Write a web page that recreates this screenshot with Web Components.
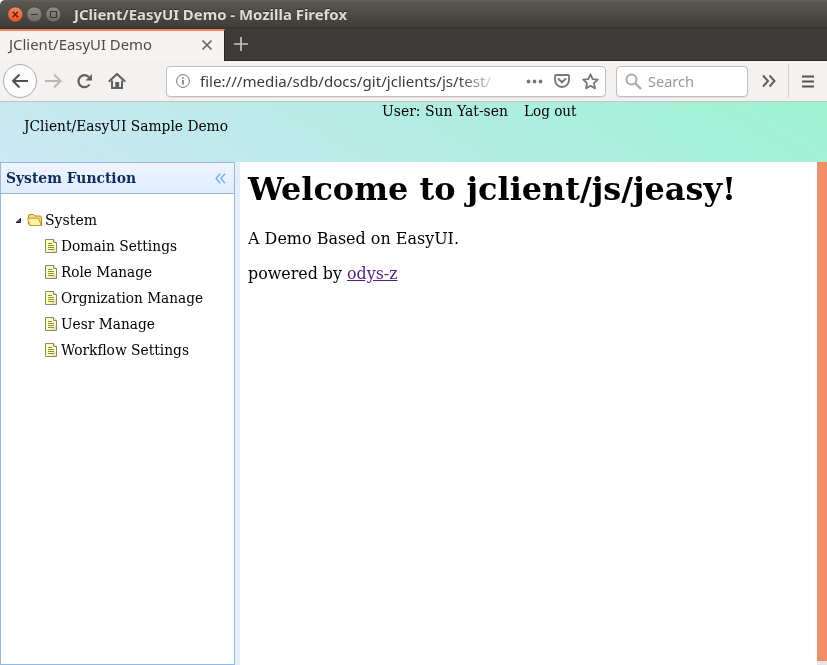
<!DOCTYPE html>
<html lang="en"><head><meta charset="utf-8"><title>JClient/EasyUI Demo</title>
<style>html,body{margin:0;height:100%;overflow:hidden;background:#fff}</style></head><body>
<browser-window></browser-window>
<script>
const define=(name,css,html)=>customElements.define(name,class extends HTMLElement{
  constructor(){super();this.attachShadow({mode:'open'}).innerHTML='<style>*{box-sizing:border-box}svg{display:block;flex:none}'+css+'</style>'+html}
});

/* One line of text set to an exact width */
customElements.define('fit-text',class extends HTMLElement{
  connectedCallback(){
    if(this.shadowRoot)return;
    const r=this.attachShadow({mode:'open'}),w=+this.getAttribute('w');
    r.innerHTML='<style>:host{display:block;flex:none;white-space:pre;width:'+w+'px}span{display:inline-block;transform-origin:0 50%}</style><span><slot></slot></span>';
    const s=r.querySelector('span');
    s.style.transform='scaleX('+w/s.getBoundingClientRect().width+')';
  }
});

define('title-bar',`
:host{display:flex;align-items:center;height:29px;padding:0 0 0 7px;background:linear-gradient(#66635a 0,#595750 2px,#3e3d38 27px,#302f2b 29px);border-radius:5px 0 0 0;font:bold 14px "Noto Sans","Open Sans",sans-serif;color:#dfdbd2}
.b{display:flex;gap:3px;margin-right:12px}fit-text{line-height:20px;text-shadow:0 -1px #302f2b}`,
`<div class="b">
<svg width="16" height="17" viewBox="0 0 16 17"><defs><linearGradient id="o" x2="0" y2="1"><stop stop-color="#f78964"/><stop offset="1" stop-color="#e4501f"/></linearGradient></defs><circle cx="8.300" cy="8.500" r="7.600" fill="url(#o)" stroke="#3d3b36" stroke-width=".6"/><path d="M5.600 5.800l5.400 5.400m0-5.400l-5.400 5.400" stroke="#542513" stroke-width="1.300"/></svg>
<svg width="16" height="17" viewBox="0 0 16 17"><defs><linearGradient id="g" x2="0" y2="1"><stop stop-color="#929087"/><stop offset="1" stop-color="#6a6860"/></linearGradient></defs><circle cx="8.300" cy="8.500" r="7.600" fill="url(#g)" stroke="#3d3b36" stroke-width=".6"/><path d="M5 8.500h7" stroke="#3a3934"/></svg>
<svg width="16" height="17" viewBox="0 0 16 17"><defs><linearGradient id="h" x2="0" y2="1"><stop stop-color="#929087"/><stop offset="1" stop-color="#6a6860"/></linearGradient></defs><circle cx="8.300" cy="8.500" r="7.600" fill="url(#h)" stroke="#3d3b36" stroke-width=".6"/><path d="M5.500 5.500h6v6h-6z" fill="none" stroke="#3a3934" stroke-width="1.200"/></svg>
</div><fit-text w="273" style="margin-left:.5px">JClient/EasyUI Demo - Mozilla Firefox</fit-text>`);

define('tab-strip',`
:host{display:flex;height:32px;background:#3c3b37;border-bottom:1px solid #2b2a28;font:14px "Noto Sans","Open Sans",sans-serif;color:#4c4c4c}
.t{width:225px;height:32px;background:#f5f4f2;border-top:2px solid #f0855f;border-right:1px solid #252422;display:flex;align-items:center;justify-content:space-between;padding:0 11px 2px 9px}
.p{margin:8px 0 0 9px}fit-text{line-height:20px}`,
`<div class="t"><fit-text w="143">JClient/EasyUI Demo</fit-text><svg width="12" height="12" viewBox="0 0 12 12"><path d="M1.500 1.500l9 9m0-9l-9 9" stroke="#656565" stroke-width="1.700"/></svg></div>
<svg class="p" width="15" height="15" viewBox="0 0 15 15"><path d="M7 0v14M0 7h14" stroke="#c8c4c0" stroke-width="1.700"/></svg>`);

define('nav-toolbar',`
:host{display:flex;align-items:center;height:41px;background:#f3f2f0;border-bottom:1px solid #c5c3c0;padding-left:3px;font:15px "Noto Sans","Open Sans",sans-serif;color:#3b3b3b}
.back{width:34px;height:34px;border:1px solid #aaa;border-radius:50%;background:#fcfcfc;display:grid;place-items:center;flex:none}
.f{height:31px;border:1px solid #c4beba;border-radius:4px;background:#fff;display:flex;align-items:center;flex:none;box-shadow:0 1px 1px #0001}
.u{width:440px;margin-left:40px;padding-left:9px}.s{width:132px;margin-left:10px;padding-left:8px;color:#9697a0}
.url{margin-left:10px;-webkit-mask:linear-gradient(90deg,#000 258px,#0003 291px);mask:linear-gradient(90deg,#000 258px,#0003 291px)}
.sep{width:1px;height:34px;background:#d4d2cf;margin-left:11px;flex:none}fit-text{line-height:22px}`,
`<div class="back"><svg width="18" height="16" viewBox="0 0 18 16"><path d="M17 8H2m6.500-6.500L2 8l6.500 6.500" fill="none" stroke="#505050" stroke-width="2" stroke-linejoin="round"/></svg></div>
<svg width="18" height="16" viewBox="0 0 18 16" style="margin-left:8px"><path d="M0 8h15M9 1.500L15.500 8 9 14.500" fill="none" stroke="#b9b8b7" stroke-width="2"/></svg>
<svg width="17" height="16" viewBox="0 0 17 16" style="margin-left:13px"><path d="M13.500 11.500A6 6 0 1 1 13 4.200" fill="none" stroke="#606060" stroke-width="2.200"/><path d="M16 1v6.500H9.500z" fill="#606060"/></svg>
<svg width="18" height="18" viewBox="0 0 18 18" style="margin-left:15px"><path d="M1.500 9L9 2l7.500 7" fill="none" stroke="#606060" stroke-width="2.200" stroke-linejoin="round" stroke-linecap="round"/><path d="M4 8.500V16h10V8.500" fill="none" stroke="#606060" stroke-width="2"/><path d="M7.200 10h4v6h-4z" fill="#606060"/></svg>
<div class="f u"><svg width="14" height="14" viewBox="0 0 14 14"><circle cx="7" cy="7" r="6.400" fill="none" stroke="#777"/><path d="M7 6v4.500M7 3.200v1.600" stroke="#777" stroke-width="1.600"/></svg>
<fit-text class="url" w="291">file:///media/sdb/docs/git/jclients/js/test/</fit-text>
<svg width="17" height="5" viewBox="0 0 17 5" style="margin-left:35px"><g fill="#777"><circle cx="2.500" cy="2.500" r="1.900"/><circle cx="8.500" cy="2.500" r="1.900"/><circle cx="14.500" cy="2.500" r="1.900"/></g></svg>
<svg width="16" height="16" viewBox="0 0 16 16" style="margin-left:11px"><path d="M2 2h12q1 0 1 1v4A7 7 0 0 1 1 7V3q0-1 1-1z" fill="none" stroke="#777" stroke-width="1.800"/><path d="M4.500 6L8 9.300 11.500 6" fill="none" stroke="#777" stroke-width="2" stroke-linecap="round"/></svg>
<svg width="17" height="17" viewBox="0 0 17 17" style="margin-left:12px"><path d="M8.500 1.300l2.200 4.800 5.100.6-3.800 3.500 1 5.200-4.500-2.600L4 15.400l1-5.200-3.800-3.500 5.100-.6z" fill="none" stroke="#777" stroke-width="1.800" stroke-linejoin="round"/></svg></div>
<div class="f s"><svg width="17" height="17" viewBox="0 0 17 17"><circle cx="6.500" cy="6.500" r="5" fill="none" stroke="#aaa" stroke-width="2"/><path d="M10 10l6 6" stroke="#aaa" stroke-width="2.400"/></svg><fit-text w="46" style="margin-left:6px">Search</fit-text></div>
<svg width="14" height="14" viewBox="0 0 14 14" style="margin-left:14px"><path d="M1 1.500L6 7l-5 5.500M7.500 1.500l5 5.500-5 5.500" fill="none" stroke="#606060" stroke-width="2"/></svg>
<div class="sep" style="margin-left:12px"></div>
<svg width="13" height="13" viewBox="0 0 13 13" style="margin-left:13px"><path d="M0 1.500h12M0 6.500h12M0 11.500h12" stroke="#555" stroke-width="2"/></svg>`);

define('demo-header',`
:host{display:flex;align-items:flex-start;height:60px;background:linear-gradient(30deg,#cee7f5,#b4ece3 50%,#9cf3d3);padding-left:24px;font:14px/18px "DejaVu Serif Condensed","DejaVu Serif",serif;color:#000}
.l{margin-top:15px}.u{margin-left:154px}.o{margin-left:16px}`,
`<fit-text class="l" w="204">JClient/EasyUI Sample Demo</fit-text><fit-text class="u" w="126">User: Sun Yat-sen</fit-text><fit-text class="o" w="52.500">Log out</fit-text>`);

define('tree-item',`:host{display:flex;align-items:center;height:26px;padding-left:43px}`,
`<svg width="14" height="16" viewBox="0 0 14 16"><path d="M1.500 1.500h8l3 3v10h-11z" fill="#ffffae" stroke="#858585"/><path d="M12 9v5H6z" fill="#fbe09b"/><path d="M9.500 1.500v3h3" fill="#fff" stroke="#858585"/><path d="M4 5.500h4M4 7.500h6M4 9.500h6M4 11.500h6" stroke="#8b8b60"/></svg><slot></slot>`);

define('side-panel',`
:host{display:block;width:235px;border:1px solid #95b8e7;flex:none;font:14px/18px "DejaVu Serif Condensed","DejaVu Serif",serif;color:#000}
header{height:31px;display:flex;align-items:center;justify-content:space-between;background:linear-gradient(#eff5ff,#e0ecff);border-bottom:1px solid #95b8e7;padding:0 8px 0 5px;color:#0e2d5f;font-weight:bold}
.tree{padding-top:13px}.root{display:flex;align-items:center;height:26px;padding-left:14px}tree-item fit-text{margin-left:3px}`,
`<header><fit-text w="130">System Function</fit-text><svg width="11" height="11" viewBox="0 0 11 11"><path d="M5.200.8L1 5.500l4.200 4.700M10 .8L5.800 5.500 10 10.200" fill="none" stroke="#65b1ed" stroke-width="1.300"/></svg></header>
<div class="tree"><div class="root"><svg width="7" height="7" viewBox="0 0 7 7"><path d="M5.500 1.500v4H1z" fill="#555" stroke="#222"/></svg>
<svg width="16" height="14" viewBox="0 0 16 14" style="margin:0 2px 0 5px"><path d="M1.500 11V3q0-1.500 1.500-1.500h3.500L8 3h5q1.500 0 1.500 1.500V12.500H3z" fill="#f5dc72" stroke="#b98b21"/><path d="M3 12.500L.7 6q-.2-.8.700-.8h9.500q.8 0 1 .8l2.300 6.500z" fill="#fff2a1" stroke="#c39a2b"/></svg><fit-text w="52">System</fit-text></div>
<tree-item><fit-text w="116">Domain Settings</fit-text></tree-item>
<tree-item><fit-text w="91">Role Manage</fit-text></tree-item>
<tree-item><fit-text w="142">Orgnization Manage</fit-text></tree-item>
<tree-item><fit-text w="94">Uesr Manage</fit-text></tree-item>
<tree-item><fit-text w="128">Workflow Settings</fit-text></tree-item></div>`);

define('main-content',`
:host{display:block;flex:1;padding:8px 0 0 8px;font:16px/19px "DejaVu Serif Condensed","DejaVu Serif",serif;color:#000}
h1{font:bold 32px/38px "DejaVu Serif Condensed","DejaVu Serif",serif;margin:0 0 21px}p{margin:0 0 16px;display:flex}a{color:#551a8b;text-decoration:underline}`,
`<h1><fit-text w="488">Welcome to jclient/js/jeasy!</fit-text></h1><p><fit-text w="211">A Demo Based on EasyUI.</fit-text></p><p><fit-text w="149.500">powered by <a href="#">odys-z</a></fit-text></p>`);

define('browser-window',`
:host{display:flex;flex-direction:column;width:827px;height:665px;background:#fff}
.w{display:flex;flex:1;min-height:0}.split{width:5px;background:#e6eef8}.bar{width:10px;background:#e6e6e6;padding-bottom:4px}.thumb{height:100%;background:#f08e68}`,
`<title-bar></title-bar><tab-strip></tab-strip><nav-toolbar></nav-toolbar><demo-header></demo-header>
<div class="w"><side-panel></side-panel><div class="split"></div><main-content></main-content><div class="bar"><div class="thumb"></div></div></div>`);
</script></body></html>
